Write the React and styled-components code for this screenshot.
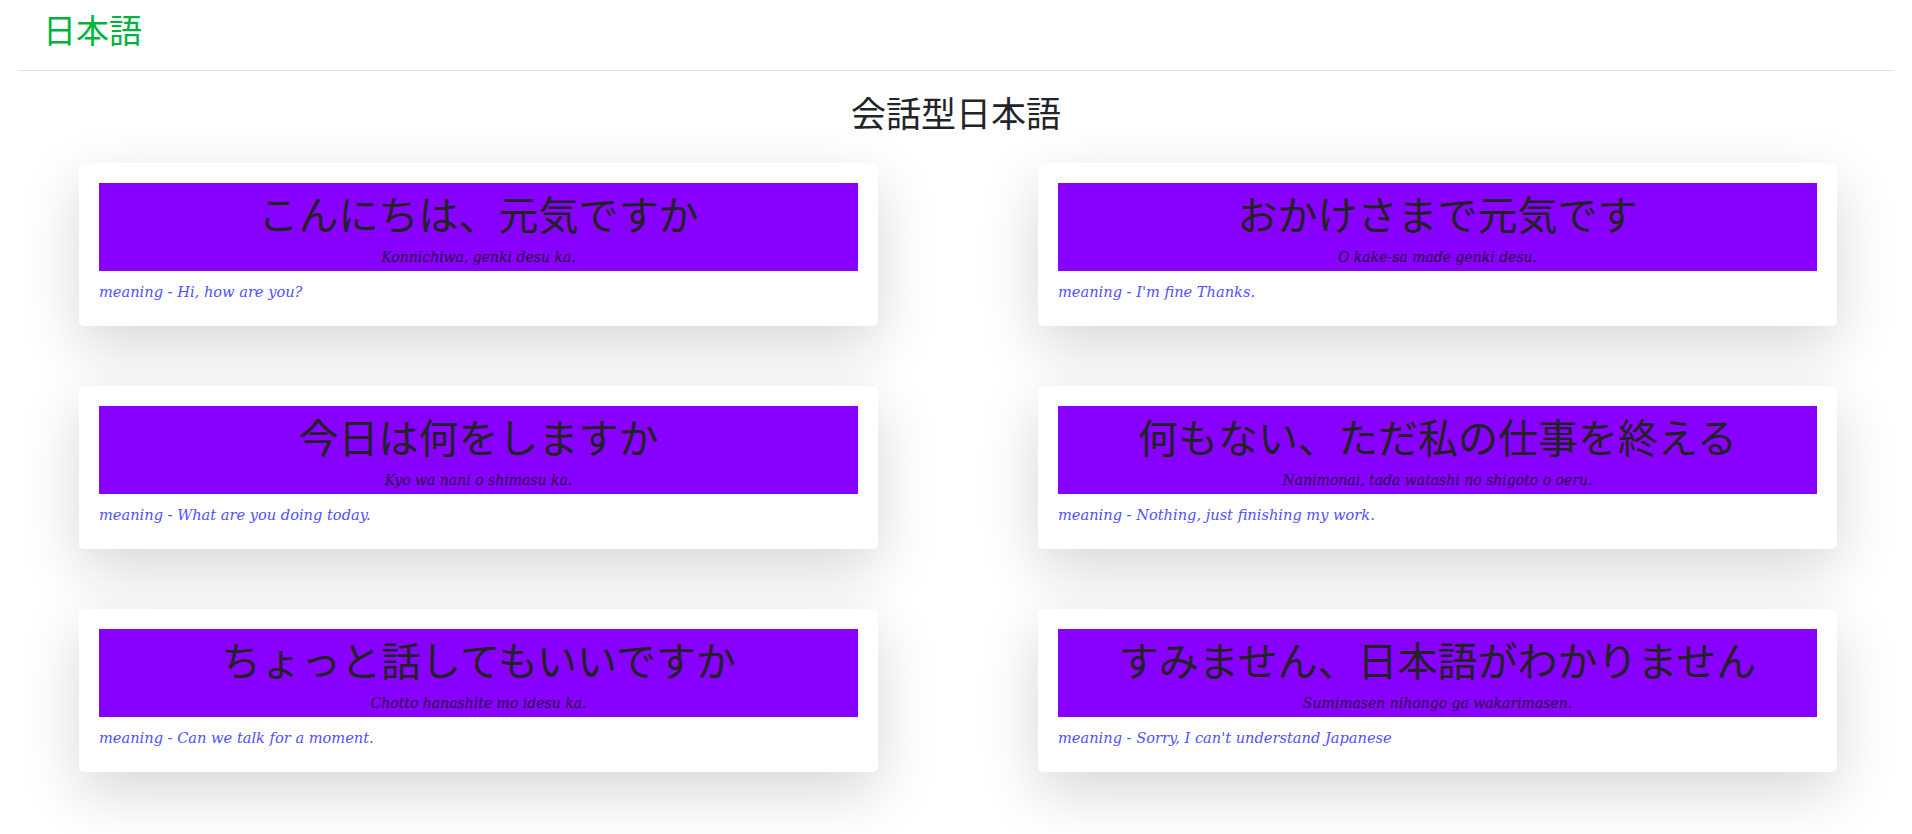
import styled, { createGlobalStyle } from "styled-components";

const GlobalStyle = createGlobalStyle`
  body {
    margin: 0;
    background: #fff;
    font-family: "Noto Sans CJK JP", "Noto Sans", sans-serif;
    color: #212529;
  }
`;

const Nav = styled.nav`
  margin: 0 18px;
  height: 70px;
  display: flex;
  align-items: center;
  padding-left: 25px;
  border-bottom: 1px solid #e2e2e2;
`;

const Brand = styled.a`
  font-size: 33px;
  line-height: 1;
  color: #00b33c;
  text-decoration: none;
  margin-top: -12px;
`;

const Title = styled.h1`
  margin: 20px 0 30px;
  font-size: 35px;
  line-height: 42px;
  font-weight: 400;
  text-align: center;
  color: #212529;
`;

const Grid = styled.div`
  display: grid;
  grid-template-columns: 1fr 1fr;
  column-gap: 160px;
  row-gap: 60px;
  padding: 0 75px 100px 79px;
`;

const Card = styled.div`
  background: #fff;
  border-radius: 5px;
  padding: 20px;
  height: 163px;
  box-sizing: border-box;
  box-shadow: 0 20px 60px rgba(0, 0, 0, 0.16);
`;

const Phrase = styled.div`
  background: #8800ff;
  height: 88px;
  text-align: center;
  display: flex;
  flex-direction: column;
`;

const Japanese = styled.div`
  font-size: 40px;
  line-height: 60px;
  color: #222;
`;

const Romaji = styled.div`
  margin-top: 3px;
  font-family: "DejaVu Serif", "Liberation Serif", serif;
  font-style: italic;
  font-size: 14px;
  line-height: 22px;
  color: #2a0a3a;
`;

const Meaning = styled.div`
  margin-top: 10px;
  font-family: "DejaVu Serif", "Liberation Serif", serif;
  font-style: italic;
  font-size: 14.6px;
  line-height: 21px;
  color: #5050ff;
`;

const phrases = [
  {
    jp: "こんにちは、元気ですか",
    romaji: "Konnichiwa, genki desu ka.",
    meaning: "Hi, how are you?",
  },
  {
    jp: "おかけさまで元気です",
    romaji: "O kake-sa made genki desu.",
    meaning: "I'm fine Thanks.",
  },
  {
    jp: "今日は何をしますか",
    romaji: "Kyo wa nani o shimasu ka.",
    meaning: "What are you doing today.",
  },
  {
    jp: "何もない、ただ私の仕事を終える",
    romaji: "Nanimonai, tada watashi no shigoto o oeru.",
    meaning: "Nothing, just finishing my work.",
  },
  {
    jp: "ちょっと話してもいいですか",
    romaji: "Chotto hanashite mo idesu ka.",
    meaning: "Can we talk for a moment.",
  },
  {
    jp: "すみません、日本語がわかりません",
    romaji: "Sumimasen nihongo ga wakarimasen.",
    meaning: "Sorry, I can't understand Japanese",
  },
];

function PhraseCard({ jp, romaji, meaning }) {
  return (
    <Card>
      <Phrase>
        <Japanese>{jp}</Japanese>
        <Romaji>{romaji}</Romaji>
      </Phrase>
      <Meaning>meaning - {meaning}</Meaning>
    </Card>
  );
}

export default function App() {
  return (
    <>
      <GlobalStyle />
      <Nav>
        <Brand href="#">日本語</Brand>
      </Nav>
      <Title>会話型日本語</Title>
      <Grid>
        {phrases.map((p) => (
          <PhraseCard key={p.jp} {...p} />
        ))}
      </Grid>
    </>
  );
}
